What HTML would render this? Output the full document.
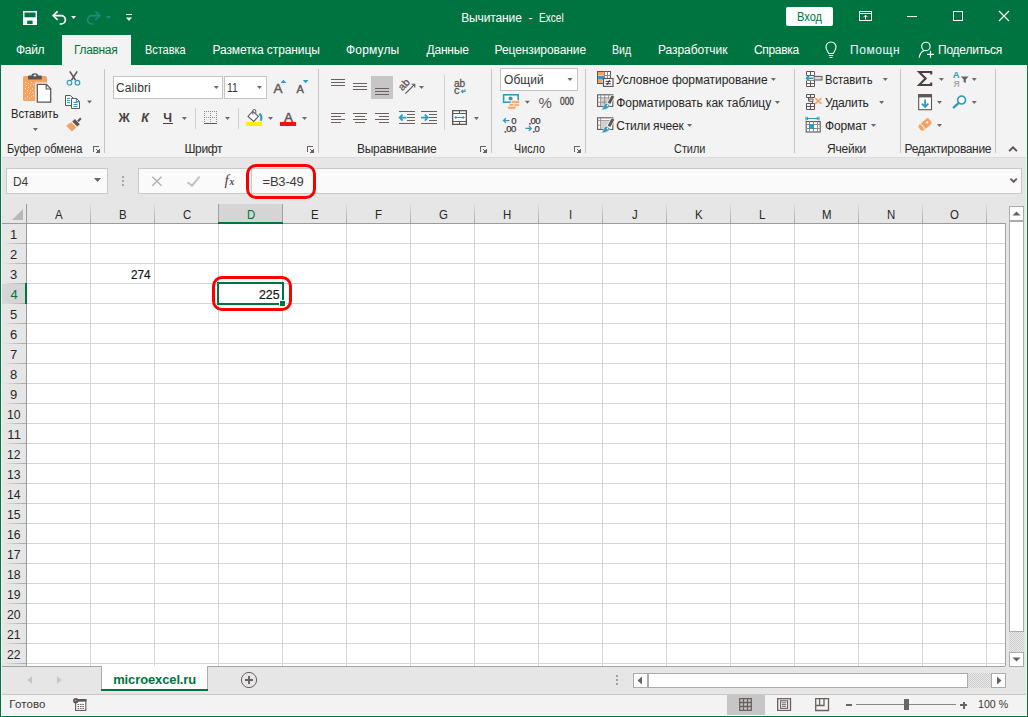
<!DOCTYPE html>
<html lang="ru"><head><meta charset="utf-8"><title>Вычитание - Excel</title>
<style>
html,body{margin:0;padding:0;}
body{width:1028px;height:717px;overflow:hidden;position:relative;background:#e6e6e6;font-family:"Liberation Sans",sans-serif;}
#app{position:absolute;left:0;top:0;width:1028px;height:717px;overflow:hidden;}
#app div,#app span,#app svg{position:absolute;}
#app span{white-space:pre;line-height:1;}
</style></head><body><div id="app">
<div style="left:0px;top:0px;width:1028px;height:65px;background:#007440;"></div>
<div style="left:62px;top:35px;width:69px;height:30px;background:#f3f3f3;"></div>
<div style="left:0px;top:65px;width:1028px;height:92px;background:#f3f3f3;"></div>
<div style="left:0px;top:157px;width:1028px;height:1px;background:#dcdcdc;"></div>
<div style="left:0px;top:158px;width:1028px;height:559px;background:#e6e6e6;"></div>
<svg style="left:22px;top:10px;" width="16" height="16" viewBox="0 0 16 16"><rect x="1.75" y="1.75" width="12.5" height="12.5" fill="none" stroke="#fff" stroke-width="1.5"/><rect x="2" y="7.3" width="12" height="7" fill="#fff"/><rect x="5.2" y="10.6" width="5.4" height="3.5" fill="#007440"/></svg>
<svg style="left:50px;top:9px;" width="18" height="17" viewBox="0 0 18 17"><path d="M3.4 6.6H11.2A4.2 4.2 0 0 1 11.2 15H9.6" fill="none" stroke="#fff" stroke-width="1.7"/><path d="M7.6 2.4L3.2 6.6L7.6 10.8" fill="none" stroke="#fff" stroke-width="1.7"/></svg>
<svg style="left:70px;top:15px;" width="8" height="6" viewBox="0 0 8 6"><polygon points="1.1,1.1 6.1,1.1 3.6,4.1" fill="#fff"/></svg>
<svg style="left:85px;top:9px;" width="18" height="17" viewBox="0 0 18 17"><path d="M14.6 6.6H6.8A4.2 4.2 0 0 0 6.8 15H8.4" fill="none" stroke="#1b8b7b" stroke-width="1.7"/><path d="M10.4 2.4L14.8 6.6L10.4 10.8" fill="none" stroke="#1b8b7b" stroke-width="1.7"/></svg>
<svg style="left:105px;top:15px;" width="8" height="6" viewBox="0 0 8 6"><polygon points="1.1,1.1 6.1,1.1 3.6,4.1" fill="#1b8b7b"/></svg>
<div style="left:126px;top:14px;width:6px;height:1px;background:#fff;"></div>
<svg style="left:125px;top:16px;" width="9" height="6.4" viewBox="0 0 9 6.4"><polygon points="1,1.5 7,1.5 4,4.9" fill="#fff"/></svg>
<span style="left:461.20px;top:12px;font-size:12px;color:#fff;letter-spacing:-0.125px;">Вычитание</span>
<span style="left:528.40px;top:12px;font-size:12px;color:#fff;">-</span>
<span style="left:539.46px;top:12px;font-size:12px;color:#fff;transform:scaleX(0.8393);transform-origin:0 0;">Excel</span>
<div style="left:786px;top:7px;width:47px;height:19px;background:#fff;border-radius:2px;"></div>
<span style="left:797.08px;top:11px;font-size:12px;color:#007440;transform:scaleX(0.9231);transform-origin:0 0;">Вход</span>
<svg style="left:858px;top:10px;" width="16" height="13" viewBox="0 0 16 13"><rect x="1.5" y="1.5" width="12" height="9" fill="none" stroke="#fff" stroke-width="1"/><path d="M1.5 3.5H13.5" stroke="#fff" stroke-width="1"/><path d="M7.5 9.5V5.5M5.5 7.2L7.5 5.2L9.5 7.2" fill="none" stroke="#fff" stroke-width="1"/></svg>
<div style="left:907px;top:16px;width:10px;height:1px;background:#fff;"></div>
<div style="left:953px;top:11px;width:10px;height:10px;background:transparent;border:1px solid #fff;box-sizing:border-box;"></div>
<svg style="left:998px;top:10px;" width="12" height="12" viewBox="0 0 12 12"><path d="M1 1L11 11M11 1L1 11" stroke="#fff" stroke-width="1.2"/></svg>
<span style="left:16.00px;top:44px;font-size:12px;color:#fff;letter-spacing:-0.333px;">Файл</span>
<span style="left:74.00px;top:44px;font-size:12px;color:#007440;letter-spacing:-0.333px;">Главная</span>
<span style="left:145.09px;top:44px;font-size:12px;color:#fff;transform:scaleX(0.9091);transform-origin:0 0;">Вставка</span>
<span style="left:212.50px;top:44px;font-size:12px;color:#fff;letter-spacing:-0.094px;">Разметка страницы</span>
<span style="left:346.00px;top:44px;font-size:12px;color:#fff;letter-spacing:0.167px;">Формулы</span>
<span style="left:426.50px;top:44px;font-size:12px;color:#fff;letter-spacing:-0.200px;">Данные</span>
<span style="left:494.50px;top:44px;font-size:12px;color:#fff;letter-spacing:-0.077px;">Рецензирование</span>
<span style="left:612.12px;top:44px;font-size:12px;color:#fff;transform:scaleX(0.8810);transform-origin:0 0;">Вид</span>
<span style="left:658.00px;top:44px;font-size:12px;color:#fff;letter-spacing:-0.050px;">Разработчик</span>
<span style="left:754.00px;top:44px;font-size:12px;color:#fff;letter-spacing:-0.333px;">Справка</span>
<span style="left:850.00px;top:44px;font-size:12px;color:#dff0f5;letter-spacing:0.600px;-webkit-text-stroke:0.12px #dff0f5;">Помощн</span>
<span style="left:938.00px;top:44px;font-size:12px;color:#fff;letter-spacing:-0.222px;">Поделиться</span>
<svg style="left:824px;top:41px;" width="14" height="18" viewBox="0 0 14 18"><path d="M4.5 12.5C4.5 10.5 2 9.5 2 6A5 5 0 0 1 12 6C12 9.5 9.5 10.5 9.5 12.5Z" fill="none" stroke="#fff" stroke-width="1.1"/><path d="M4.8 14.5H9.2M5.5 16.5H8.5" stroke="#fff" stroke-width="1"/></svg>
<svg style="left:918px;top:41px;" width="17" height="18" viewBox="0 0 17 18"><circle cx="7.9" cy="5.4" r="4.2" fill="none" stroke="#fff" stroke-width="1.15"/><path d="M1.2 16.8C1.6 12.6 3.6 10.6 6 9.6" fill="none" stroke="#fff" stroke-width="1.15"/><path d="M12.5 9.8V16.8M9 13.3H16" stroke="#fff" stroke-width="1.15"/></svg>
<div style="left:104px;top:69px;width:1px;height:84px;background:#c6c6c6;"></div>
<div style="left:318px;top:69px;width:1px;height:84px;background:#c6c6c6;"></div>
<div style="left:491px;top:69px;width:1px;height:84px;background:#c6c6c6;"></div>
<div style="left:585px;top:69px;width:1px;height:84px;background:#c6c6c6;"></div>
<div style="left:794px;top:69px;width:1px;height:84px;background:#c6c6c6;"></div>
<div style="left:900px;top:69px;width:1px;height:84px;background:#c6c6c6;"></div>
<div style="left:995px;top:69px;width:1px;height:84px;background:#c6c6c6;"></div>
<span style="left:6.58px;top:143px;font-size:12px;color:#2b2b2b;transform:scaleX(0.9250);transform-origin:0 0;">Буфер обмена</span>
<span style="left:184.50px;top:143px;font-size:12px;color:#2b2b2b;letter-spacing:-0.375px;">Шрифт</span>
<span style="left:357.00px;top:143px;font-size:12px;color:#2b2b2b;letter-spacing:-0.273px;">Выравнивание</span>
<span style="left:514.11px;top:143px;font-size:12px;color:#2b2b2b;transform:scaleX(0.8939);transform-origin:0 0;">Число</span>
<span style="left:674.09px;top:143px;font-size:12px;color:#2b2b2b;transform:scaleX(0.9091);transform-origin:0 0;">Стили</span>
<span style="left:827.00px;top:143px;font-size:12px;color:#2b2b2b;letter-spacing:-0.200px;">Ячейки</span>
<span style="left:904.50px;top:143px;font-size:12px;color:#2b2b2b;letter-spacing:-0.346px;">Редактирование</span>
<svg style="left:93px;top:146px;" width="8" height="8" viewBox="0 0 8 8"><g fill="#6a6060" shape-rendering="crispEdges"><rect x="0" y="0" width="1" height="6"/><rect x="0" y="0" width="6" height="1"/><rect x="3" y="3" width="1" height="1"/><rect x="4" y="4" width="3" height="3"/><rect x="6" y="3" width="1" height="1"/><rect x="3" y="6" width="1" height="1"/></g></svg>
<svg style="left:307px;top:146px;" width="8" height="8" viewBox="0 0 8 8"><g fill="#6a6060" shape-rendering="crispEdges"><rect x="0" y="0" width="1" height="6"/><rect x="0" y="0" width="6" height="1"/><rect x="3" y="3" width="1" height="1"/><rect x="4" y="4" width="3" height="3"/><rect x="6" y="3" width="1" height="1"/><rect x="3" y="6" width="1" height="1"/></g></svg>
<svg style="left:480px;top:146px;" width="8" height="8" viewBox="0 0 8 8"><g fill="#6a6060" shape-rendering="crispEdges"><rect x="0" y="0" width="1" height="6"/><rect x="0" y="0" width="6" height="1"/><rect x="3" y="3" width="1" height="1"/><rect x="4" y="4" width="3" height="3"/><rect x="6" y="3" width="1" height="1"/><rect x="3" y="6" width="1" height="1"/></g></svg>
<svg style="left:574px;top:146px;" width="8" height="8" viewBox="0 0 8 8"><g fill="#6a6060" shape-rendering="crispEdges"><rect x="0" y="0" width="1" height="6"/><rect x="0" y="0" width="6" height="1"/><rect x="3" y="3" width="1" height="1"/><rect x="4" y="4" width="3" height="3"/><rect x="6" y="3" width="1" height="1"/><rect x="3" y="6" width="1" height="1"/></g></svg>
<svg style="left:1006px;top:143px;" width="14" height="11" viewBox="0 0 14 11"><path d="M3.1 8.2L7 4.3L10.9 8.2" fill="none" stroke="#5e5555" stroke-width="1.9"/></svg>
<svg style="left:22px;top:72px;" width="31" height="32" viewBox="0 0 31 32"><rect x="1" y="4" width="24" height="25" rx="1.6" fill="#f4a460"/>
<path d="M6 7.6V4.6Q6 3.6 7 3.6H9.4Q9.6 1.2 12.8 1.2Q16 1.2 16.2 3.6H18.8Q19.8 3.6 19.8 4.6V7.6Z" fill="#5e5555"/><rect x="11.6" y="2.7" width="2.6" height="1.6" fill="#f3f3f3"/>
<path d="M13.2 10.6H25.5L30.6 15.7V31.8H13.2Z" fill="#f3f3f3"/>
<path d="M15.3 12.4H24.4L28.7 16.7V30.2H15.3Z" fill="#fff" stroke="#5e5555" stroke-width="1.3" stroke-linejoin="miter"/><path d="M24.2 12.6V17H28.6" fill="none" stroke="#5e5555" stroke-width="1.2"/>
<g fill="#fde3cb"><rect x="3" y="10" width="1" height="1"/><rect x="6" y="11" width="1" height="1"/><rect x="9" y="10" width="1" height="1"/><rect x="4" y="13" width="1" height="1"/><rect x="8" y="13" width="1" height="1"/><rect x="11" y="12" width="1" height="1"/><rect x="3" y="16" width="1" height="1"/><rect x="6" y="15" width="1" height="1"/><rect x="10" y="16" width="1" height="1"/><rect x="5" y="18" width="1" height="1"/><rect x="8" y="18" width="1" height="1"/><rect x="3" y="21" width="1" height="1"/><rect x="7" y="21" width="1" height="1"/><rect x="10" y="20" width="1" height="1"/><rect x="5" y="24" width="1" height="1"/><rect x="9" y="24" width="1" height="1"/><rect x="3" y="26" width="1" height="1"/><rect x="7" y="26" width="1" height="1"/><rect x="11" y="23" width="1" height="1"/></g></svg>
<span style="left:11.37px;top:108px;font-size:12px;color:#262626;transform:scaleX(0.9347);transform-origin:0 0;">Вставить</span>
<svg style="left:31px;top:126px;" width="8" height="6" viewBox="0 0 8 6"><polygon points="1.9,1.9 6.9,1.9 4.4,4.9" fill="#6f6767"/></svg>
<svg style="left:65px;top:70px;" width="17" height="17" viewBox="0 0 17 17"><path d="M4.8 1.4L10.6 10.4M12.2 1.4L6.4 10.4" stroke="#5e5555" stroke-width="1.6" fill="none"/><circle cx="4.5" cy="12.7" r="2.3" fill="none" stroke="#2f9bc1" stroke-width="1.2"/><circle cx="12.5" cy="12.7" r="2.3" fill="none" stroke="#2f9bc1" stroke-width="1.2"/></svg>
<svg style="left:64px;top:94px;" width="18" height="16" viewBox="0 0 18 16"><path d="M1.5 1.5H6.5L9 4V11.5H1.5Z" fill="#fff" stroke="#5e5555" stroke-width="1"/><path d="M7.5 4.5H12.5L15.5 7.5V14.5H7.5Z" fill="#fff" stroke="#5e5555" stroke-width="1"/><path d="M12.3 4.7V7.7H15.3" fill="none" stroke="#5e5555" stroke-width="0.9"/><path d="M3 4.5H6M3 6.5H6M3 8.5H6M9.5 8.5H13.5M9.5 10.5H13.5M9.5 12.5H13.5" stroke="#2f9bc1" stroke-width="1"/></svg>
<svg style="left:86px;top:99px;" width="8" height="6" viewBox="0 0 8 6"><polygon points="1,1.5 6,1.5 3.5,4.5" fill="#6f6767"/></svg>
<svg style="left:65px;top:116px;" width="18" height="17" viewBox="0 0 18 17"><path d="M12.2 4.4L15.2 1.6L16.6 3.1L13.7 5.9Z" fill="#5e5555"/><path d="M8.4 4.6L11.2 2.2L16 7.4L13.4 9.8Z" fill="#5e5555" transform="translate(-1.2 0.8)"/><path d="M6.2 6.2L11.4 11.6L6.8 15.6L1.2 9.8Z" fill="#f4a460"/></svg>
<div style="left:113px;top:76px;width:110px;height:23px;background:#fff;border:1px solid #c4c4c4;box-sizing:border-box;"></div>
<div style="left:224px;top:76px;width:43px;height:23px;background:#fff;border:1px solid #c4c4c4;box-sizing:border-box;"></div>
<span style="left:116.00px;top:82px;font-size:12px;color:#333;letter-spacing:0.117px;">Calibri</span>
<svg style="left:212px;top:85px;" width="8" height="6" viewBox="0 0 8 6"><polygon points="1.8,1.1 6.8,1.1 4.3,4.1" fill="#6f6767"/></svg>
<span style="left:227.14px;top:82px;font-size:12px;color:#333;transform:scaleX(0.8636);transform-origin:0 0;">11</span>
<svg style="left:256px;top:85px;" width="8" height="6" viewBox="0 0 8 6"><polygon points="1,1.1 6,1.1 3.5,4.1" fill="#6f6767"/></svg>
<span style="left:273.60px;top:82px;font-size:13.5px;color:#5e5555;-webkit-text-stroke:0.4px #5e5555;">A</span>
<svg style="left:280px;top:79px;" width="7" height="5" viewBox="0 0 7 5"><polygon points="0.6,4 3.5,0.8 6.4,4" fill="#2f9bc1"/></svg>
<span style="left:296.50px;top:84px;font-size:11px;color:#5e5555;-webkit-text-stroke:0.4px #5e5555;">A</span>
<svg style="left:302px;top:79px;" width="7" height="5" viewBox="0 0 7 5"><polygon points="0.8,1 6.4,1 3.6,4.2" fill="#2f9bc1"/></svg>
<span style="left:118.40px;top:112px;font-size:12.5px;color:#4a3f3f;font-weight:bold;">Ж</span>
<span style="left:141.20px;top:112px;font-size:12.5px;color:#4a3f3f;font-weight:bold;font-style:italic;">К</span>
<span style="left:163.30px;top:112px;font-size:12.5px;color:#4a3f3f;font-weight:bold;">Ч</span>
<div style="left:163px;top:123px;width:10px;height:1px;background:#4a3f3f;"></div>
<svg style="left:180px;top:116px;" width="8" height="6" viewBox="0 0 8 6"><polygon points="1.9,1 6.9,1 4.4,4" fill="#6f6767"/></svg>
<div style="left:195px;top:108px;width:1px;height:21px;background:#d0d0d0;"></div>
<svg style="left:204px;top:110px;" width="14" height="15" viewBox="0 0 14 15"><path d="M0.5 1V13M6.5 1V13M12.5 1V13M0 1.5H13M0 7.5H13" fill="none" stroke="#8f8888" stroke-width="1" stroke-dasharray="1 1"/><path d="M0 13.5H13" stroke="#5e5555" stroke-width="1"/></svg>
<svg style="left:224px;top:116px;" width="8" height="6" viewBox="0 0 8 6"><polygon points="1,1 6,1 3.5,4" fill="#6f6767"/></svg>
<div style="left:238px;top:108px;width:1px;height:21px;background:#d0d0d0;"></div>
<svg style="left:245px;top:108px;" width="19" height="14" viewBox="0 0 19 14"><path d="M7.6 3.4L13.4 8.4L8.8 13.4L3 8.4Z" fill="#fff" stroke="#5e5555" stroke-width="1.1"/><path d="M7.8 6.5V3A1.5 1.5 0 0 1 10.8 3V5.6" fill="none" stroke="#5e5555" stroke-width="1"/><path d="M14.4 5.6Q17.8 8.6 15.6 12.8" fill="none" stroke="#2f9bc1" stroke-width="2.1"/></svg>
<div style="left:246px;top:122px;width:16px;height:4px;background:#ffef00;"></div>
<svg style="left:267px;top:116px;" width="8" height="6" viewBox="0 0 8 6"><polygon points="1,1 6,1 3.5,4" fill="#6f6767"/></svg>
<span style="left:284.10px;top:111px;font-size:13.5px;color:#5e5555;-webkit-text-stroke:0.45px #5e5555;">A</span>
<div style="left:280px;top:122px;width:16px;height:4px;background:#f40f0f;"></div>
<svg style="left:301px;top:116px;" width="8" height="6" viewBox="0 0 8 6"><polygon points="1,1 6,1 3.5,4" fill="#6f6767"/></svg>
<div style="left:371px;top:76px;width:22px;height:23px;background:#c6c6c6;"></div>
<div style="left:331px;top:79px;width:14px;height:1px;background:#6a6060;"></div>
<div style="left:331px;top:82px;width:14px;height:1px;background:#6a6060;"></div>
<div style="left:331px;top:85px;width:14px;height:1px;background:#6a6060;"></div>
<div style="left:353px;top:83px;width:14px;height:1px;background:#6a6060;"></div>
<div style="left:353px;top:86px;width:14px;height:1px;background:#6a6060;"></div>
<div style="left:353px;top:89px;width:14px;height:1px;background:#6a6060;"></div>
<div style="left:375px;top:88px;width:14px;height:1px;background:#6a6060;"></div>
<div style="left:375px;top:91px;width:14px;height:1px;background:#6a6060;"></div>
<div style="left:375px;top:94px;width:14px;height:1px;background:#6a6060;"></div>
<svg style="left:397px;top:77px;" width="20" height="19" viewBox="0 0 20 19"><text x="0" y="0" font-family="Liberation Sans, sans-serif" font-size="10.5" fill="#5e5555" stroke="#5e5555" stroke-width="0.3" transform="translate(5.6 14.2) rotate(-47)">ab</text><path d="M8.4 16.6L17.6 7.4" fill="none" stroke="#5e5555" stroke-width="1.2"/><path d="M14.6 7.2H17.8V10.4" fill="none" stroke="#5e5555" stroke-width="1.1"/></svg>
<svg style="left:418px;top:84px;" width="8" height="6" viewBox="0 0 8 6"><polygon points="1,1.9 6,1.9 3.5,4.9" fill="#6f6767"/></svg>
<div style="left:444px;top:75px;width:1px;height:55px;background:#d0d0d0;"></div>
<span style="left:454.30px;top:78px;font-size:11px;color:#5e5555;-webkit-text-stroke:0.3px #5e5555;transform:scaleX(0.9167);transform-origin:0 0;">ab</span>
<span style="left:454.00px;top:85px;font-size:11px;color:#5e5555;-webkit-text-stroke:0.3px #5e5555;">c</span>
<svg style="left:460px;top:88px;" width="7" height="7" viewBox="0 0 7 7"><path d="M5 1.2V3.4H1.8M3.2 1.8L1.5 3.4L3.2 5" fill="none" stroke="#2f9bc1" stroke-width="1.1"/></svg>
<div style="left:331px;top:113px;width:14px;height:1px;background:#6a6060;"></div>
<div style="left:331px;top:116px;width:10px;height:1px;background:#6a6060;"></div>
<div style="left:331px;top:119px;width:14px;height:1px;background:#6a6060;"></div>
<div style="left:331px;top:122px;width:10px;height:1px;background:#6a6060;"></div>
<div style="left:353px;top:113px;width:14px;height:1px;background:#6a6060;"></div>
<div style="left:355px;top:116px;width:10px;height:1px;background:#6a6060;"></div>
<div style="left:353px;top:119px;width:14px;height:1px;background:#6a6060;"></div>
<div style="left:355px;top:122px;width:10px;height:1px;background:#6a6060;"></div>
<div style="left:375px;top:113px;width:14px;height:1px;background:#6a6060;"></div>
<div style="left:379px;top:116px;width:10px;height:1px;background:#6a6060;"></div>
<div style="left:375px;top:119px;width:14px;height:1px;background:#6a6060;"></div>
<div style="left:379px;top:122px;width:10px;height:1px;background:#6a6060;"></div>
<div style="left:399px;top:111px;width:16px;height:1px;background:#6a6060;"></div>
<div style="left:399px;top:123px;width:16px;height:1px;background:#6a6060;"></div>
<div style="left:407px;top:114px;width:8px;height:1px;background:#6a6060;"></div>
<div style="left:407px;top:117px;width:8px;height:1px;background:#6a6060;"></div>
<div style="left:407px;top:120px;width:8px;height:1px;background:#6a6060;"></div>
<svg style="left:398px;top:113px;" width="10" height="9" viewBox="0 0 10 9"><path d="M8.4 4.6H2M4.6 1.6L1.6 4.6L4.6 7.6" fill="none" stroke="#2f9bc1" stroke-width="1.7"/></svg>
<div style="left:421px;top:111px;width:16px;height:1px;background:#6a6060;"></div>
<div style="left:421px;top:123px;width:16px;height:1px;background:#6a6060;"></div>
<div style="left:429px;top:114px;width:8px;height:1px;background:#6a6060;"></div>
<div style="left:429px;top:117px;width:8px;height:1px;background:#6a6060;"></div>
<div style="left:429px;top:120px;width:8px;height:1px;background:#6a6060;"></div>
<svg style="left:420px;top:113px;" width="10" height="9" viewBox="0 0 10 9"><path d="M1 4.6H7.6M4.8 1.6L7.8 4.6L4.8 7.6" fill="none" stroke="#2f9bc1" stroke-width="1.7"/></svg>
<svg style="left:452px;top:110px;" width="15" height="15" viewBox="0 0 15 15"><rect x="0.65" y="0.65" width="13.7" height="13.7" fill="#fff" stroke="#5e5555" stroke-width="1.3"/><path d="M0.5 3.5H14.5M0.5 11.5H14.5M7.5 0.5V3.5M7.5 11.5V14.5" fill="none" stroke="#5e5555" stroke-width="1"/><path d="M2.8 7.5H12.2M4.3 6L2.8 7.5L4.3 9M10.7 6L12.2 7.5L10.7 9" fill="none" stroke="#2f9bc1" stroke-width="1"/></svg>
<svg style="left:472px;top:116px;" width="8" height="6" viewBox="0 0 8 6"><polygon points="1.9,1 6.9,1 4.4,4" fill="#6f6767"/></svg>
<div style="left:500px;top:68px;width:78px;height:23px;background:#fff;border:1px solid #c4c4c4;box-sizing:border-box;"></div>
<span style="left:504.10px;top:74px;font-size:12px;color:#333;">Общий</span>
<svg style="left:566px;top:77px;" width="8" height="6" viewBox="0 0 8 6"><polygon points="1.5,1.1 6.5,1.1 4,4.1" fill="#6f6767"/></svg>
<svg style="left:502px;top:93px;" width="19" height="18" viewBox="0 0 19 18"><rect x="1.6" y="1.8" width="14.6" height="7.4" fill="#fff" stroke="#2f9bc1" stroke-width="1.6"/><circle cx="8.6" cy="5.5" r="2.1" fill="#2f9bc1"/><g stroke="#f3f3f3" stroke-width="0.8" fill="#f4a460"><rect x="9" y="7.6" width="8.6" height="3" rx="1.5"/><rect x="7" y="10.4" width="8.6" height="3" rx="1.5"/><rect x="5.4" y="13.2" width="8.6" height="3" rx="1.5"/><rect x="11.5" y="10.8" width="6" height="2.4" rx="1.2"/></g></svg>
<svg style="left:523px;top:99px;" width="8" height="6" viewBox="0 0 8 6"><polygon points="1.9,1.7 6.9,1.7 4.4,4.7" fill="#6f6767"/></svg>
<span style="left:538.50px;top:95px;font-size:15px;color:#5e5555;">%</span>
<span style="left:560.30px;top:97px;font-size:10px;color:#4a4242;-webkit-text-stroke:0.3px #4a4242;transform:scaleX(0.8375);transform-origin:0 0;">000</span>
<svg style="left:502px;top:117px;" width="18" height="16" viewBox="0 0 18 16"><path d="M7.4 3.6H1.6M3.9 1.3L1.5 3.6L3.9 5.9" fill="none" stroke="#2f9bc1" stroke-width="1.3"/><text x="9.2" y="7.2" font-family="Liberation Sans, sans-serif" font-size="9.5" stroke="#3c3434" stroke-width="0.25" fill="#3c3434">0</text><text x="2" y="14.6" font-family="Liberation Sans, sans-serif" font-size="9.5" letter-spacing="-0.5" stroke="#3c3434" stroke-width="0.25" fill="#3c3434">,00</text></svg>
<svg style="left:524px;top:117px;" width="18" height="16" viewBox="0 0 18 16"><text x="4.4" y="7.2" font-family="Liberation Sans, sans-serif" font-size="9.5" letter-spacing="-0.5" stroke="#3c3434" stroke-width="0.25" fill="#3c3434">,00</text><path d="M1.4 11.4H7.2M4.9 9.1L7.3 11.4L4.9 13.7" fill="none" stroke="#2f9bc1" stroke-width="1.3"/><text x="8.4" y="14.6" font-family="Liberation Sans, sans-serif" font-size="9.5" letter-spacing="-0.5" stroke="#3c3434" stroke-width="0.25" fill="#3c3434">,0</text></svg>
<svg style="left:597px;top:70px;" width="17" height="17" viewBox="0 0 17 17"><rect x="0.5" y="1.5" width="13" height="12" fill="#fff" stroke="#5e5555" stroke-width="1"/><rect x="1" y="2" width="6" height="3.6" fill="#f4a460"/><rect x="1" y="6" width="6" height="3.6" fill="#2f9bc1"/><rect x="1" y="10" width="4.5" height="3" fill="#f4a460"/><path d="M7.5 1.5V8M10.5 1.5V8M7.5 5.5H13.5" stroke="#8f8888" stroke-width="1" fill="none"/><rect x="6.5" y="8.5" width="9.5" height="8" fill="#fff" stroke="#5e5555" stroke-width="1.2"/><path d="M8.6 11.4H13.8M8.6 13.8H13.8M12.6 10L9.8 15.2" stroke="#333" stroke-width="1" fill="none"/></svg>
<svg style="left:597px;top:93px;" width="18" height="18" viewBox="0 0 18 18"><rect x="0.6" y="1.8" width="15.2" height="11.6" fill="#fff" stroke="#5e5555" stroke-width="1.1"/><rect x="4.2" y="5.3" width="8" height="7.6" fill="#d2cfcf"/><path d="M3.6 1.8V13.4M7.7 1.8V13.4M11.6 1.8V8M0.6 4.8H15.8M0.6 9.2H12" stroke="#8f8888" stroke-width="0.9" fill="none"/><path d="M16.2 2.6L11.6 10.8" stroke="#f3f3f3" stroke-width="4.6"/><path d="M16 3L12 10.2" stroke="#5e5555" stroke-width="2.9"/><path d="M8.8 10.2L13 12.4C12 15 8.4 17 4.2 16.8C6.6 15 6.6 11.8 8.8 10.2Z" fill="#2f9bc1" stroke="#f3f3f3" stroke-width="0.5"/><circle cx="10.4" cy="12.6" r="0.8" fill="#fff"/></svg>
<svg style="left:597px;top:116px;" width="18" height="18" viewBox="0 0 18 18"><rect x="0.6" y="1.8" width="15.2" height="11.6" fill="#fff" stroke="#5e5555" stroke-width="1.1"/><rect x="4.2" y="5.3" width="8" height="7.6" fill="#d2cfcf"/><path d="M3.6 1.8V13.4M0.6 4.6H15.8M0.6 9.2H4" stroke="#8f8888" stroke-width="0.9" fill="none"/><path d="M16.2 2.6L11.6 10.8" stroke="#f3f3f3" stroke-width="4.6"/><path d="M16 3L12 10.2" stroke="#5e5555" stroke-width="2.9"/><path d="M8.8 10.2L13 12.4C12 15 8.4 17 4.2 16.8C6.6 15 6.6 11.8 8.8 10.2Z" fill="#2f9bc1" stroke="#f3f3f3" stroke-width="0.5"/><circle cx="10.4" cy="12.6" r="0.8" fill="#fff"/></svg>
<span style="left:616.00px;top:74px;font-size:12px;color:#262626;letter-spacing:-0.045px;">Условное форматирование</span>
<svg style="left:769px;top:77px;" width="8" height="6" viewBox="0 0 8 6"><polygon points="1.9,1 6.9,1 4.4,4" fill="#6f6767"/></svg>
<span style="left:616.30px;top:97px;font-size:12px;color:#262626;letter-spacing:-0.054px;">Форматировать как таблицу</span>
<svg style="left:773px;top:100px;" width="8" height="6" viewBox="0 0 8 6"><polygon points="1.9,1 6.9,1 4.4,4" fill="#6f6767"/></svg>
<span style="left:616.30px;top:120px;font-size:12px;color:#262626;letter-spacing:-0.180px;">Стили ячеек</span>
<svg style="left:686px;top:123px;" width="8" height="6" viewBox="0 0 8 6"><polygon points="1.1,1 6.1,1 3.6,4" fill="#6f6767"/></svg>
<svg style="left:805px;top:71px;" width="18" height="16" viewBox="0 0 18 16"><path d="M1.5 0.5H9.5V4.5H1.5ZM5.5 0.5V4.5M1.5 9.5H9.5V15.5H1.5ZM1.5 12.5H9.5M5.5 9.5V15.5" fill="#fff" stroke="#5e5555" stroke-width="1"/><rect x="9" y="5.4" width="8" height="3.6" fill="#dcdada" stroke="#5e5555" stroke-width="1"/><rect x="0" y="5" width="8.6" height="4.4" fill="#f3f3f3"/><path d="M8.4 7.2H1.6M4.2 4.6L1.5 7.2L4.2 9.8" fill="none" stroke="#2f9bc1" stroke-width="1.5"/></svg>
<span style="left:825.07px;top:74px;font-size:12px;color:#262626;transform:scaleX(0.9347);transform-origin:0 0;">Вставить</span>
<svg style="left:881px;top:77px;" width="8" height="6" viewBox="0 0 8 6"><polygon points="1.8,1 6.8,1 4.3,4" fill="#6f6767"/></svg>
<svg style="left:805px;top:94px;" width="18" height="16" viewBox="0 0 18 16"><path d="M1.5 0.5H9.5V3.5H1.5ZM5.5 0.5V3.5M1.5 9.5H9.5V15.5H1.5ZM1.5 12.5H9.5M5.5 9.5V15.5M3.5 3.5V6.5H7.5V9" fill="none" stroke="#5e5555" stroke-width="1"/><rect x="4" y="5" width="4" height="2.4" fill="#dcdada" stroke="#5e5555" stroke-width="0.8"/><path d="M10.2 4.2L16.4 9.8M16.4 4.2L10.2 9.8" stroke="#f4a460" stroke-width="1.6"/></svg>
<span style="left:825.00px;top:97px;font-size:12px;color:#262626;letter-spacing:-0.333px;">Удалить</span>
<svg style="left:878px;top:100px;" width="8" height="6" viewBox="0 0 8 6"><polygon points="1.1,1 6.1,1 3.6,4" fill="#6f6767"/></svg>
<svg style="left:805px;top:116px;" width="18" height="17" viewBox="0 0 18 17"><path d="M1.2 2.5H13.6M1 0.5V4.5M14 0.5V4.5M3 1L1.6 2.5L3 4M11.8 1L13.2 2.5L11.8 4" fill="none" stroke="#2f9bc1" stroke-width="1"/><rect x="1.2" y="5.6" width="14" height="10.4" fill="#fff" stroke="#5e5555" stroke-width="1.1"/><path d="M1 8.5H15.5M1 12.5H15.5M4.5 5.5V16M8.5 5.5V16M12.5 5.5V16" stroke="#8f8888" stroke-width="1"/><rect x="4" y="8" width="5" height="5" fill="#2f9bc1"/></svg>
<span style="left:825.00px;top:120px;font-size:12px;color:#262626;letter-spacing:-0.140px;">Формат</span>
<svg style="left:870px;top:123px;" width="8" height="6" viewBox="0 0 8 6"><polygon points="1,1 6,1 3.5,4" fill="#6f6767"/></svg>
<svg style="left:916px;top:70px;" width="18" height="17" viewBox="0 0 18 17"><path d="M15.2 4.4V2H3.2L9.6 8.5L3.2 15H15.2V12.6" fill="none" stroke="#4d3f3f" stroke-width="2.1" stroke-linejoin="miter"/></svg>
<svg style="left:937px;top:77px;" width="8" height="6" viewBox="0 0 8 6"><polygon points="1.9,1 6.9,1 4.4,4" fill="#6f6767"/></svg>
<span style="left:952.75px;top:70px;font-size:9.5px;color:#2f9bc1;font-weight:bold;">A</span>
<span style="left:953.40px;top:79.7px;font-size:8.5px;color:#aaa6a6;font-weight:bold;">Я</span>
<svg style="left:960px;top:75px;" width="10" height="9" viewBox="0 0 10 9"><path d="M0.8 1.4H8.6L5.8 4.6V8L3.6 7V4.6Z" fill="#6a6262"/></svg>
<svg style="left:970px;top:77px;" width="8" height="6" viewBox="0 0 8 6"><polygon points="1.8,1 6.8,1 4.3,4" fill="#6f6767"/></svg>
<svg style="left:917px;top:93px;" width="16" height="18" viewBox="0 0 16 18"><rect x="1.7" y="1.7" width="12.8" height="15" fill="#fff" stroke="#5e5555" stroke-width="1.1"/><rect x="1.2" y="1.2" width="13.8" height="3.2" fill="#5e5555"/><path d="M8.1 6.4V14M4.8 10.6L8.1 14L11.4 10.6" fill="none" stroke="#2f9bc1" stroke-width="1.8"/></svg>
<svg style="left:936px;top:100px;" width="8" height="6" viewBox="0 0 8 6"><polygon points="1,1 6,1 3.5,4" fill="#6f6767"/></svg>
<svg style="left:952px;top:94px;" width="16" height="15" viewBox="0 0 16 15"><circle cx="9.6" cy="6.1" r="3.9" fill="#fff" stroke="#2f9bc1" stroke-width="1.7"/><path d="M6.6 9.2L1.8 13.4" stroke="#2f9bc1" stroke-width="2.3" stroke-linecap="round"/></svg>
<svg style="left:970px;top:100px;" width="8" height="6" viewBox="0 0 8 6"><polygon points="1.8,1 6.8,1 4.3,4" fill="#6f6767"/></svg>
<svg style="left:917px;top:117px;" width="16" height="15" viewBox="0 0 16 15"><g transform="rotate(-40 8 7.5)"><rect x="1.2" y="4" width="13.6" height="7.2" rx="2.6" fill="#f4a460"/><rect x="4.6" y="3.6" width="0.9" height="8" fill="#f3f3f3"/><rect x="10" y="6.2" width="2" height="2.2" fill="#fff"/></g></svg>
<svg style="left:936px;top:123px;" width="8" height="6" viewBox="0 0 8 6"><polygon points="1,1 6,1 3.5,4" fill="#6f6767"/></svg>
<div style="left:6px;top:168px;width:102px;height:26px;background:#fafafa;border:1px solid #c8c8c8;box-sizing:border-box;"></div>
<span style="left:13.08px;top:175px;font-size:13px;color:#3a3a3a;transform:scaleX(0.9187);transform-origin:0 0;">D4</span>
<svg style="left:93px;top:177px;" width="10" height="7" viewBox="0 0 10 7"><polygon points="1,1 8,1 4.5,5" fill="#666"/></svg>
<div style="left:122px;top:176px;width:2px;height:2px;background:#a6a6a6;"></div>
<div style="left:122px;top:180px;width:2px;height:2px;background:#a6a6a6;"></div>
<div style="left:122px;top:184px;width:2px;height:2px;background:#a6a6a6;"></div>
<div style="left:138px;top:168px;width:884px;height:26px;background:#fafafa;border:1px solid #c8c8c8;box-sizing:border-box;"></div>
<div style="left:251px;top:169px;width:1px;height:24px;background:#c8c8c8;"></div>
<svg style="left:151px;top:175px;" width="12" height="12" viewBox="0 0 12 12"><path d="M1.3 1.7L10.5 10.7M10.5 1.7L1.3 10.7" stroke="#b4b4b4" stroke-width="1.6"/></svg>
<svg style="left:186px;top:175px;" width="15" height="12" viewBox="0 0 15 12"><path d="M1.6 7.2L6 10.6L13.6 1.7" fill="none" stroke="#c0c0c0" stroke-width="1.9"/></svg>
<span style="left:224.45px;top:173px;font-size:15px;color:#4a4242;font-style:italic;font-family:'Liberation Serif',serif;">f</span>
<span style="left:229.45px;top:178px;font-size:9.5px;color:#4a4242;font-weight:bold;font-style:italic;font-family:'Liberation Serif',serif;">x</span>
<span style="left:262.50px;top:175px;font-size:13px;color:#3a3a3a;letter-spacing:-0.200px;">=B3-49</span>
<svg style="left:1008px;top:176px;" width="11" height="9" viewBox="0 0 11 9"><path d="M2.4 2.6L5.6 5.8L8.8 2.6" fill="none" stroke="#6a6060" stroke-width="2"/></svg>
<div style="left:246px;top:164px;width:70px;height:35px;background:transparent;border:3px solid #fb0000;border-radius:10px;box-sizing:border-box;"></div>
<div style="left:27px;top:224px;width:979px;height:442px;background:#fff;"></div>
<div style="left:219px;top:204px;width:64px;height:19px;background:#d5d5d5;"></div>
<div style="left:1px;top:284px;width:25px;height:20px;background:#d5d5d5;"></div>
<div style="left:90px;top:224px;width:1px;height:442px;background:#d4d4d4;"></div>
<div style="left:154px;top:224px;width:1px;height:442px;background:#d4d4d4;"></div>
<div style="left:218px;top:224px;width:1px;height:442px;background:#d4d4d4;"></div>
<div style="left:282px;top:224px;width:1px;height:442px;background:#d4d4d4;"></div>
<div style="left:346px;top:224px;width:1px;height:442px;background:#d4d4d4;"></div>
<div style="left:410px;top:224px;width:1px;height:442px;background:#d4d4d4;"></div>
<div style="left:474px;top:224px;width:1px;height:442px;background:#d4d4d4;"></div>
<div style="left:538px;top:224px;width:1px;height:442px;background:#d4d4d4;"></div>
<div style="left:602px;top:224px;width:1px;height:442px;background:#d4d4d4;"></div>
<div style="left:666px;top:224px;width:1px;height:442px;background:#d4d4d4;"></div>
<div style="left:730px;top:224px;width:1px;height:442px;background:#d4d4d4;"></div>
<div style="left:794px;top:224px;width:1px;height:442px;background:#d4d4d4;"></div>
<div style="left:858px;top:224px;width:1px;height:442px;background:#d4d4d4;"></div>
<div style="left:922px;top:224px;width:1px;height:442px;background:#d4d4d4;"></div>
<div style="left:986px;top:224px;width:1px;height:442px;background:#d4d4d4;"></div>
<div style="left:27px;top:243px;width:979px;height:1px;background:#d4d4d4;"></div>
<div style="left:27px;top:263px;width:979px;height:1px;background:#d4d4d4;"></div>
<div style="left:27px;top:283px;width:979px;height:1px;background:#d4d4d4;"></div>
<div style="left:27px;top:303px;width:979px;height:1px;background:#d4d4d4;"></div>
<div style="left:27px;top:323px;width:979px;height:1px;background:#d4d4d4;"></div>
<div style="left:27px;top:343px;width:979px;height:1px;background:#d4d4d4;"></div>
<div style="left:27px;top:363px;width:979px;height:1px;background:#d4d4d4;"></div>
<div style="left:27px;top:383px;width:979px;height:1px;background:#d4d4d4;"></div>
<div style="left:27px;top:403px;width:979px;height:1px;background:#d4d4d4;"></div>
<div style="left:27px;top:423px;width:979px;height:1px;background:#d4d4d4;"></div>
<div style="left:27px;top:443px;width:979px;height:1px;background:#d4d4d4;"></div>
<div style="left:27px;top:463px;width:979px;height:1px;background:#d4d4d4;"></div>
<div style="left:27px;top:483px;width:979px;height:1px;background:#d4d4d4;"></div>
<div style="left:27px;top:503px;width:979px;height:1px;background:#d4d4d4;"></div>
<div style="left:27px;top:523px;width:979px;height:1px;background:#d4d4d4;"></div>
<div style="left:27px;top:543px;width:979px;height:1px;background:#d4d4d4;"></div>
<div style="left:27px;top:563px;width:979px;height:1px;background:#d4d4d4;"></div>
<div style="left:27px;top:583px;width:979px;height:1px;background:#d4d4d4;"></div>
<div style="left:27px;top:603px;width:979px;height:1px;background:#d4d4d4;"></div>
<div style="left:27px;top:623px;width:979px;height:1px;background:#d4d4d4;"></div>
<div style="left:27px;top:643px;width:979px;height:1px;background:#d4d4d4;"></div>
<div style="left:27px;top:663px;width:979px;height:1px;background:#d4d4d4;"></div>
<div style="left:1px;top:223px;width:1005px;height:1px;background:#9b9b9b;"></div>
<div style="left:26px;top:204px;width:1px;height:462px;background:#9b9b9b;"></div>
<div style="left:1005px;top:224px;width:1px;height:442px;background:#a3a3a3;"></div>
<div style="left:90px;top:204px;width:1px;height:19px;background:transparent;background:linear-gradient(to bottom,#e0e0e0,#a6a6a6);"></div>
<div style="left:154px;top:204px;width:1px;height:19px;background:transparent;background:linear-gradient(to bottom,#e0e0e0,#a6a6a6);"></div>
<div style="left:218px;top:204px;width:1px;height:19px;background:transparent;background:linear-gradient(to bottom,#e0e0e0,#a6a6a6);"></div>
<div style="left:282px;top:204px;width:1px;height:19px;background:transparent;background:linear-gradient(to bottom,#e0e0e0,#a6a6a6);"></div>
<div style="left:346px;top:204px;width:1px;height:19px;background:transparent;background:linear-gradient(to bottom,#e0e0e0,#a6a6a6);"></div>
<div style="left:410px;top:204px;width:1px;height:19px;background:transparent;background:linear-gradient(to bottom,#e0e0e0,#a6a6a6);"></div>
<div style="left:474px;top:204px;width:1px;height:19px;background:transparent;background:linear-gradient(to bottom,#e0e0e0,#a6a6a6);"></div>
<div style="left:538px;top:204px;width:1px;height:19px;background:transparent;background:linear-gradient(to bottom,#e0e0e0,#a6a6a6);"></div>
<div style="left:602px;top:204px;width:1px;height:19px;background:transparent;background:linear-gradient(to bottom,#e0e0e0,#a6a6a6);"></div>
<div style="left:666px;top:204px;width:1px;height:19px;background:transparent;background:linear-gradient(to bottom,#e0e0e0,#a6a6a6);"></div>
<div style="left:730px;top:204px;width:1px;height:19px;background:transparent;background:linear-gradient(to bottom,#e0e0e0,#a6a6a6);"></div>
<div style="left:794px;top:204px;width:1px;height:19px;background:transparent;background:linear-gradient(to bottom,#e0e0e0,#a6a6a6);"></div>
<div style="left:858px;top:204px;width:1px;height:19px;background:transparent;background:linear-gradient(to bottom,#e0e0e0,#a6a6a6);"></div>
<div style="left:922px;top:204px;width:1px;height:19px;background:transparent;background:linear-gradient(to bottom,#e0e0e0,#a6a6a6);"></div>
<div style="left:986px;top:204px;width:1px;height:19px;background:transparent;background:linear-gradient(to bottom,#e0e0e0,#a6a6a6);"></div>
<div style="left:5px;top:243px;width:21px;height:1px;background:transparent;background:linear-gradient(to right,#e0e0e0,#a6a6a6);"></div>
<div style="left:5px;top:263px;width:21px;height:1px;background:transparent;background:linear-gradient(to right,#e0e0e0,#a6a6a6);"></div>
<div style="left:5px;top:283px;width:21px;height:1px;background:transparent;background:linear-gradient(to right,#e0e0e0,#a6a6a6);"></div>
<div style="left:5px;top:303px;width:21px;height:1px;background:transparent;background:linear-gradient(to right,#e0e0e0,#a6a6a6);"></div>
<div style="left:5px;top:323px;width:21px;height:1px;background:transparent;background:linear-gradient(to right,#e0e0e0,#a6a6a6);"></div>
<div style="left:5px;top:343px;width:21px;height:1px;background:transparent;background:linear-gradient(to right,#e0e0e0,#a6a6a6);"></div>
<div style="left:5px;top:363px;width:21px;height:1px;background:transparent;background:linear-gradient(to right,#e0e0e0,#a6a6a6);"></div>
<div style="left:5px;top:383px;width:21px;height:1px;background:transparent;background:linear-gradient(to right,#e0e0e0,#a6a6a6);"></div>
<div style="left:5px;top:403px;width:21px;height:1px;background:transparent;background:linear-gradient(to right,#e0e0e0,#a6a6a6);"></div>
<div style="left:5px;top:423px;width:21px;height:1px;background:transparent;background:linear-gradient(to right,#e0e0e0,#a6a6a6);"></div>
<div style="left:5px;top:443px;width:21px;height:1px;background:transparent;background:linear-gradient(to right,#e0e0e0,#a6a6a6);"></div>
<div style="left:5px;top:463px;width:21px;height:1px;background:transparent;background:linear-gradient(to right,#e0e0e0,#a6a6a6);"></div>
<div style="left:5px;top:483px;width:21px;height:1px;background:transparent;background:linear-gradient(to right,#e0e0e0,#a6a6a6);"></div>
<div style="left:5px;top:503px;width:21px;height:1px;background:transparent;background:linear-gradient(to right,#e0e0e0,#a6a6a6);"></div>
<div style="left:5px;top:523px;width:21px;height:1px;background:transparent;background:linear-gradient(to right,#e0e0e0,#a6a6a6);"></div>
<div style="left:5px;top:543px;width:21px;height:1px;background:transparent;background:linear-gradient(to right,#e0e0e0,#a6a6a6);"></div>
<div style="left:5px;top:563px;width:21px;height:1px;background:transparent;background:linear-gradient(to right,#e0e0e0,#a6a6a6);"></div>
<div style="left:5px;top:583px;width:21px;height:1px;background:transparent;background:linear-gradient(to right,#e0e0e0,#a6a6a6);"></div>
<div style="left:5px;top:603px;width:21px;height:1px;background:transparent;background:linear-gradient(to right,#e0e0e0,#a6a6a6);"></div>
<div style="left:5px;top:623px;width:21px;height:1px;background:transparent;background:linear-gradient(to right,#e0e0e0,#a6a6a6);"></div>
<div style="left:5px;top:643px;width:21px;height:1px;background:transparent;background:linear-gradient(to right,#e0e0e0,#a6a6a6);"></div>
<div style="left:5px;top:663px;width:21px;height:1px;background:transparent;background:linear-gradient(to right,#e0e0e0,#a6a6a6);"></div>
<div style="left:218px;top:204px;width:1px;height:19px;background:#a0a0a0;"></div>
<div style="left:282px;top:204px;width:1px;height:19px;background:#a0a0a0;"></div>
<div style="left:218px;top:222px;width:65px;height:2px;background:#007440;"></div>
<div style="left:25px;top:283px;width:2px;height:21px;background:#007440;"></div>
<svg style="left:10px;top:207px;" width="14" height="14" viewBox="0 0 14 14"><polygon points="13,2 13,13 2,13" fill="#b8b8b8"/></svg>
<span style="left:54.94px;top:208px;font-size:13px;color:#262626;transform:scaleX(0.880);transform-origin:0 0;">A</span>
<span style="left:118.94px;top:208px;font-size:13px;color:#262626;transform:scaleX(0.880);transform-origin:0 0;">B</span>
<span style="left:182.50px;top:208px;font-size:13px;color:#262626;transform:scaleX(0.880);transform-origin:0 0;">C</span>
<span style="left:246.50px;top:208px;font-size:13px;color:#007440;transform:scaleX(0.880);transform-origin:0 0;">D</span>
<span style="left:310.94px;top:208px;font-size:13px;color:#262626;transform:scaleX(0.880);transform-origin:0 0;">E</span>
<span style="left:374.94px;top:208px;font-size:13px;color:#262626;transform:scaleX(0.880);transform-origin:0 0;">F</span>
<span style="left:438.50px;top:208px;font-size:13px;color:#262626;transform:scaleX(0.880);transform-origin:0 0;">G</span>
<span style="left:502.50px;top:208px;font-size:13px;color:#262626;transform:scaleX(0.880);transform-origin:0 0;">H</span>
<span style="left:569.14px;top:208px;font-size:13px;color:#262626;transform:scaleX(0.880);transform-origin:0 0;">I</span>
<span style="left:632.26px;top:208px;font-size:13px;color:#262626;transform:scaleX(0.880);transform-origin:0 0;">J</span>
<span style="left:694.94px;top:208px;font-size:13px;color:#262626;transform:scaleX(0.880);transform-origin:0 0;">K</span>
<span style="left:759.38px;top:208px;font-size:13px;color:#262626;transform:scaleX(0.880);transform-origin:0 0;">L</span>
<span style="left:822.06px;top:208px;font-size:13px;color:#262626;transform:scaleX(0.880);transform-origin:0 0;">M</span>
<span style="left:886.50px;top:208px;font-size:13px;color:#262626;transform:scaleX(0.880);transform-origin:0 0;">N</span>
<span style="left:950.06px;top:208px;font-size:13px;color:#262626;transform:scaleX(0.880);transform-origin:0 0;">O</span>
<span style="left:9.90px;top:228px;font-size:13px;color:#262626;">1</span>
<span style="left:9.90px;top:248px;font-size:13px;color:#262626;">2</span>
<span style="left:9.90px;top:268px;font-size:13px;color:#262626;">3</span>
<span style="left:10.40px;top:288px;font-size:13px;color:#007440;">4</span>
<span style="left:9.90px;top:308px;font-size:13px;color:#262626;">5</span>
<span style="left:9.90px;top:328px;font-size:13px;color:#262626;">6</span>
<span style="left:9.90px;top:348px;font-size:13px;color:#262626;">7</span>
<span style="left:9.90px;top:368px;font-size:13px;color:#262626;">8</span>
<span style="left:9.90px;top:388px;font-size:13px;color:#262626;">9</span>
<span style="left:7.36px;top:408px;font-size:13px;color:#262626;transform:scaleX(0.9385);transform-origin:0 0;">10</span>
<span style="left:7.30px;top:428px;font-size:13px;color:#262626;letter-spacing:0.200px;">11</span>
<span style="left:7.36px;top:448px;font-size:13px;color:#262626;transform:scaleX(0.9385);transform-origin:0 0;">12</span>
<span style="left:7.36px;top:468px;font-size:13px;color:#262626;transform:scaleX(0.9385);transform-origin:0 0;">13</span>
<span style="left:7.36px;top:488px;font-size:13px;color:#262626;transform:scaleX(0.9385);transform-origin:0 0;">14</span>
<span style="left:7.36px;top:508px;font-size:13px;color:#262626;transform:scaleX(0.9385);transform-origin:0 0;">15</span>
<span style="left:7.36px;top:528px;font-size:13px;color:#262626;transform:scaleX(0.9385);transform-origin:0 0;">16</span>
<span style="left:7.36px;top:548px;font-size:13px;color:#262626;transform:scaleX(0.9385);transform-origin:0 0;">17</span>
<span style="left:7.36px;top:568px;font-size:13px;color:#262626;transform:scaleX(0.9385);transform-origin:0 0;">18</span>
<span style="left:7.36px;top:588px;font-size:13px;color:#262626;transform:scaleX(0.9385);transform-origin:0 0;">19</span>
<span style="left:7.36px;top:608px;font-size:13px;color:#262626;transform:scaleX(0.9385);transform-origin:0 0;">20</span>
<span style="left:7.36px;top:628px;font-size:13px;color:#262626;transform:scaleX(0.9385);transform-origin:0 0;">21</span>
<span style="left:7.36px;top:648px;font-size:13px;color:#262626;transform:scaleX(0.9385);transform-origin:0 0;">22</span>
<span style="left:131.10px;top:268px;font-size:13px;color:#151515;-webkit-text-stroke:0.2px #151515;transform:scaleX(0.9048);transform-origin:0 0;">274</span>
<span style="left:259.05px;top:288px;font-size:13px;color:#151515;-webkit-text-stroke:0.2px #151515;transform:scaleX(0.9500);transform-origin:0 0;">225</span>
<div style="left:217px;top:282px;width:67px;height:23px;background:transparent;border:2px solid #007440;box-sizing:border-box;"></div>
<div style="left:279px;top:300px;width:7px;height:7px;background:#007440;border:1px solid #fff;box-sizing:border-box;"></div>
<div style="left:212px;top:276px;width:80px;height:35px;background:transparent;border:3px solid #fb0000;border-radius:10px;box-sizing:border-box;"></div>
<div style="left:1009px;top:206px;width:15px;height:15px;background:#fff;border:1px solid #ababab;box-sizing:border-box;"></div>
<svg style="left:1012px;top:210px;" width="9" height="7" viewBox="0 0 9 7"><polygon points="0.5,5.5 8.5,5.5 4.5,1.5" fill="#6a6060"/></svg>
<div style="left:1009px;top:221px;width:15px;height:411px;background:#fff;border:1px solid #ababab;box-sizing:border-box;"></div>
<div style="left:1009px;top:632px;width:15px;height:20px;background:#e6e6e6;background-image:repeating-conic-gradient(#cdcdcd 0 25%,#e9e9e9 0 50%);background-size:2px 2px;"></div>
<div style="left:1009px;top:652px;width:15px;height:15px;background:#fff;border:1px solid #ababab;box-sizing:border-box;"></div>
<svg style="left:1012px;top:656px;" width="9" height="7" viewBox="0 0 9 7"><polygon points="0.5,1.5 8.5,1.5 4.5,5.5" fill="#6a6060"/></svg>
<div style="left:1px;top:666px;width:1004px;height:1px;background:#a3a3a3;"></div>
<div style="left:101px;top:666px;width:107px;height:25px;background:#fff;border-left:1px solid #ababab;border-right:1px solid #ababab;box-sizing:border-box;"></div>
<div style="left:101px;top:689px;width:107px;height:2px;background:#007440;"></div>
<span style="left:113.20px;top:673px;font-size:13px;color:#007440;font-weight:bold;letter-spacing:-0.125px;">microexcel.ru</span>
<svg style="left:26px;top:675px;" width="8" height="10" viewBox="0 0 8 10"><polygon points="6,1 6,9 1.5,5" fill="#c6c6c6"/></svg>
<svg style="left:55px;top:675px;" width="8" height="10" viewBox="0 0 8 10"><polygon points="2,1 2,9 6.5,5" fill="#c6c6c6"/></svg>
<svg style="left:240px;top:671px;" width="18" height="18" viewBox="0 0 18 18"><circle cx="9" cy="9" r="7.6" fill="none" stroke="#6a6060" stroke-width="1"/><path d="M9 5V13M5 9H13" stroke="#6a6060" stroke-width="1.9"/></svg>
<div style="left:616px;top:675px;width:2px;height:2px;background:#a0a0a0;"></div>
<div style="left:616px;top:679px;width:2px;height:2px;background:#a0a0a0;"></div>
<div style="left:616px;top:683px;width:2px;height:2px;background:#a0a0a0;"></div>
<div style="left:633px;top:673px;width:15px;height:15px;background:#fff;border:1px solid #ababab;box-sizing:border-box;"></div>
<svg style="left:636px;top:676px;" width="8" height="9" viewBox="0 0 8 9"><polygon points="6,0.5 6,8.5 1.5,4.5" fill="#6a6060"/></svg>
<div style="left:648px;top:673px;width:320px;height:15px;background:#fff;border:1px solid #ababab;box-sizing:border-box;"></div>
<div style="left:968px;top:673px;width:23px;height:15px;background:#e6e6e6;background-image:repeating-conic-gradient(#cdcdcd 0 25%,#e9e9e9 0 50%);background-size:2px 2px;"></div>
<div style="left:991px;top:673px;width:15px;height:15px;background:#fff;border:1px solid #ababab;box-sizing:border-box;"></div>
<svg style="left:995px;top:676px;" width="8" height="9" viewBox="0 0 8 9"><polygon points="2,0.5 2,8.5 6.5,4.5" fill="#6a6060"/></svg>
<div style="left:0px;top:694px;width:1028px;height:23px;background:#f3f3f3;"></div>
<div style="left:0px;top:694px;width:1028px;height:1px;background:#c8c8c8;"></div>
<span style="left:9.30px;top:699px;font-size:11.5px;color:#3b3333;letter-spacing:0.140px;">Готово</span>
<svg style="left:73px;top:698px;" width="14" height="14" viewBox="0 0 14 14"><rect x="2.6" y="1.6" width="10.2" height="10.8" fill="#fff" stroke="#5e5555" stroke-width="1.1"/><rect x="5" y="1" width="8.4" height="2.6" fill="#5e5555"/><circle cx="2.8" cy="2.8" r="2.7" fill="#5e5555"/><circle cx="2.6" cy="2.4" r="0.7" fill="#b9b3b3"/><path d="M4.6 6.4H11.4M4.6 8.4H11.4M4.6 10.4H11.4" stroke="#5e5555" stroke-width="1" stroke-dasharray="1.6 0.8"/></svg>
<div style="left:727px;top:695px;width:38px;height:21px;background:#c6c6c6;"></div>
<svg style="left:739px;top:698px;" width="14" height="14" viewBox="0 0 14 14"><path d="M0.7 0.7H12.3V12.3H0.7ZM4.5 0.5V12.5M8.5 0.5V12.5M0.5 4.5H12.5M0.5 8.5H12.5" fill="none" stroke="#6a6060" stroke-width="1.3"/></svg>
<svg style="left:777px;top:698px;" width="15" height="13" viewBox="0 0 15 13"><rect x="0.7" y="0.7" width="12.8" height="11.8" fill="none" stroke="#6a6060" stroke-width="1.3"/><rect x="3.6" y="2.8" width="7" height="7.6" fill="none" stroke="#6a6060" stroke-width="1.1"/><path d="M5 4.8H9.2M5 6.6H9.2M5 8.4H9.2" stroke="#6a6060" stroke-width="0.9"/></svg>
<svg style="left:815px;top:698px;" width="15" height="14" viewBox="0 0 15 14"><path d="M0.7 0.7H13.5V12.5H0.7ZM0.7 7.5H9V0.7M4.6 0.7V7.5" fill="none" stroke="#6a6060" stroke-width="1.3"/></svg>
<div style="left:846px;top:704px;width:6px;height:2px;background:#666;"></div>
<div style="left:856px;top:704px;width:100px;height:1px;background:#888;"></div>
<div style="left:904px;top:699px;width:5px;height:11px;background:#666;"></div>
<div style="left:960px;top:704px;width:7px;height:2px;background:#666;"></div>
<div style="left:962.5px;top:701.5px;width:2px;height:7px;background:#666;"></div>
<span style="left:978.18px;top:699px;font-size:11.5px;color:#3b3333;transform:scaleX(0.9226);transform-origin:0 0;">100 %</span>
<div style="left:1px;top:65px;width:1px;height:651px;background:#f6f4f4;"></div>
<div style="left:1026px;top:65px;width:1px;height:651px;background:#f6f4f4;"></div>
<div style="left:0px;top:65px;width:1px;height:652px;background:#007440;"></div>
<div style="left:1027px;top:65px;width:1px;height:652px;background:#007440;"></div>
<div style="left:1px;top:715px;width:1026px;height:1px;background:#fafafa;"></div>
<div style="left:0px;top:716px;width:1028px;height:1px;background:#007440;"></div>
</div></body></html>
